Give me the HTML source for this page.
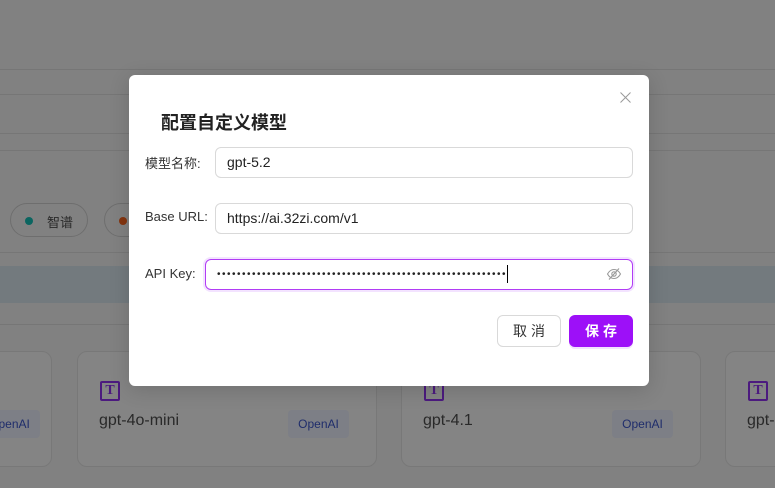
<!DOCTYPE html>
<html><head><meta charset="utf-8"><style>
*{box-sizing:border-box;margin:0;padding:0}
html,body{background:#ececec}
body{width:775px;height:488px;overflow:hidden;font-family:"Liberation Sans","Noto Sans CJK SC",sans-serif;position:relative}
.ab{position:absolute}
.line{position:absolute;left:0;width:775px;height:1px;background:#d8d8d8}
.pill{position:absolute;top:203px;height:34px;border:1px solid #c8c8c8;border-radius:17px;font-size:13px;color:#4c4c4c}
.card{position:absolute;top:351px;height:116px;width:300px;border:1px solid #dadada;border-radius:10px;background:#f0f0f0}
.tag{position:absolute;top:58px;height:28px;width:61px;border-radius:4px;background:#e3e8f4;color:#3a52c4;font-size:12px;line-height:28px;text-align:center}
.ticon{position:absolute;left:22px;top:29px;width:20px;height:20px;border:2px solid #8a30e8;border-radius:2px;color:#8a30e8;font:bold 14px "Liberation Serif",serif;text-align:center;line-height:16px}
.cname{position:absolute;left:21px;top:60px;font-size:16px;color:#4c4c4c}
.overlay{position:absolute;left:0;top:0;width:775px;height:488px;background:rgba(0,0,0,.45)}
.modal{position:absolute;left:129px;top:75px;width:520px;height:311px;background:#fff;border-radius:6px;box-shadow:0 4px 20px rgba(0,0,0,.15)}
.lbl{position:absolute;font-size:13px;color:#333;text-align:right}
.inp{position:absolute;height:31px;border:1px solid #d9d9d9;border-radius:6px;font-size:14px;color:#222;padding-left:11px;line-height:29px}
</style></head><body>
<div class="line" style="top:69px"></div>
<div class="line" style="top:94px"></div>
<div class="line" style="top:133px"></div>
<div class="line" style="top:150px"></div>
<div class="pill" style="left:10px;width:78px"><span class="ab" style="left:14px;top:13px;width:8px;height:8px;border-radius:50%;background:#14b8b0"></span><span class="ab" style="left:36px;top:8px">智谱</span></div>
<div class="pill" style="left:104px;width:80px"><span class="ab" style="left:14px;top:13px;width:8px;height:8px;border-radius:50%;background:#f0601c"></span></div>
<div class="line" style="top:252px"></div>
<div class="ab" style="left:0;top:266px;width:775px;height:37px;background:#d2dfe6"></div>
<div class="line" style="top:324px"></div>
<div class="card" style="left:-248px"><div class="tag" style="left:226px">OpenAI</div></div>
<div class="card" style="left:77px"><div class="ticon">T</div><div class="cname">gpt-4o-mini</div><div class="tag" style="left:210px">OpenAI</div></div>
<div class="card" style="left:401px"><div class="ticon">T</div><div class="cname">gpt-4.1</div><div class="tag" style="left:210px">OpenAI</div></div>
<div class="card" style="left:725px"><div class="ticon">T</div><div class="cname">gpt-4</div></div>
<svg class="ab" style="left:0;top:0" width="775" height="488"><rect width="775" height="488" fill="#000" fill-opacity="0.45"/></svg>
<div class="modal">
<svg class="ab" style="left:491px;top:17px" width="11" height="11" viewBox="0 0 11 11"><path d="M0.5 0.5L10.5 10.5M10.5 0.5L0.5 10.5" stroke="#999" stroke-width="1"/></svg>
<div class="ab" style="left:32px;top:34px;font-size:18px;font-weight:bold;color:#222">配置自定义模型</div>
<div class="lbl" style="left:16px;top:78px">模型名称:</div>
<div class="inp" style="left:86px;top:72px;width:418px">gpt-5.2</div>
<div class="lbl" style="left:16px;top:134px">Base URL:</div>
<div class="inp" style="left:86px;top:128px;width:418px">https://ai.32zi.com/v1</div>
<div class="lbl" style="left:16px;top:191px">API Key:</div>
<div class="inp" style="left:76px;top:184px;width:428px;border-color:#b13cf5;box-shadow:0 0 0 2px #f3e3ff;font-size:10px;letter-spacing:1.5px;padding-left:11px;white-space:nowrap">••••••••••••••••••••••••••••••••••••••••••••••••••••••••••<span style="display:inline-block;width:1px;height:18px;background:#000;vertical-align:middle"></span>
<svg class="ab" style="left:400px;top:7px" width="16" height="14" viewBox="0 0 16 14"><path d="M1.5 7C3.5 3.5 5.5 2.5 8 2.5S12.5 3.5 14.5 7C12.5 10.5 10.5 11.5 8 11.5S3.5 10.5 1.5 7Z" fill="none" stroke="#999" stroke-width="1.1"/><circle cx="8" cy="7" r="2.2" fill="none" stroke="#999" stroke-width="1.1"/><path d="M3 12.5L13 1.5" stroke="#999" stroke-width="1.1"/></svg></div>
<div class="ab" style="left:368px;top:240px;width:64px;height:32px;border:1px solid #d9d9d9;border-radius:6px;font-size:14px;color:#333;text-align:center;line-height:30px;letter-spacing:4px;padding-left:4px">取消</div>
<div class="ab" style="left:440px;top:240px;width:64px;height:32px;border-radius:6px;background:#9d10f8;box-shadow:0 2px 0 #f1e3fd;font-size:14px;font-weight:bold;color:#fff;text-align:center;line-height:32px;letter-spacing:4px;padding-left:4px">保存</div>
</div>
</body></html>
